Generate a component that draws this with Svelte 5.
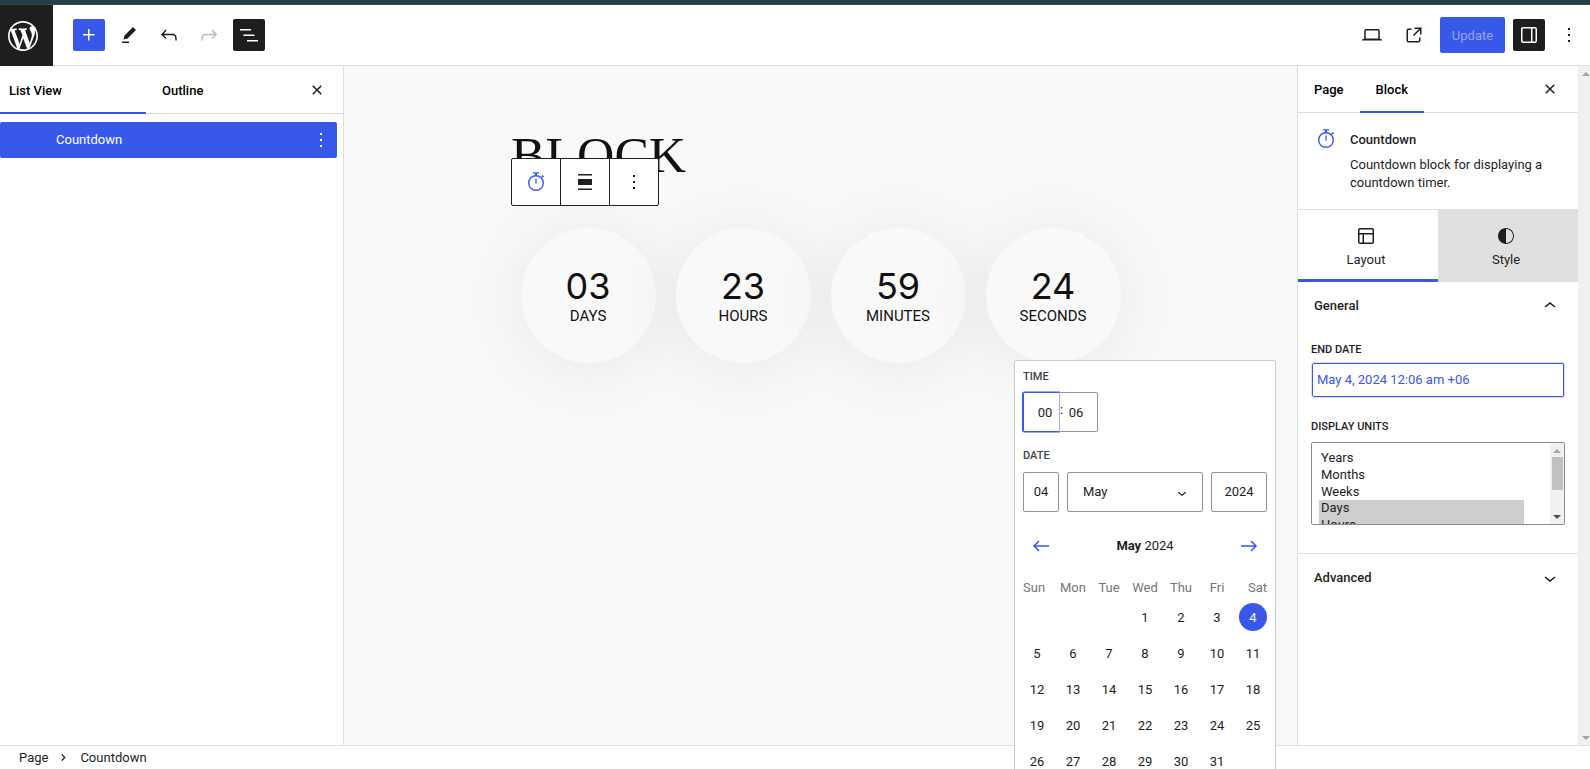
<script>
  const icons = {
    plus: 'M11 12.5V17.5H12.5V12.5H17.5V11H12.5V6H11V11H6V12.5H11Z',
    pencil: 'm19 7-3-3-8.5 8.5-1 4 4-1L19 7Zm-7 11.5H5V20h7v-1.5Z',
    undo: 'M18.3 11.7c-.6-.6-1.4-.9-2.3-.9H6.7l2.9-3.3-1.1-1-4.5 5L8.5 16l1-1-2.7-2.7H16c.5 0 .9.2 1.3.5 1 1 1 3.4 1 4.5v.3h1.5v-.2c0-1.5 0-4.3-1.5-5.7z',
    redo: 'M15.6 6.5l-1.1 1 2.9 3.3H8c-.9 0-1.7.3-2.3.9-1.4 1.5-1.4 4.2-1.4 5.6v.2h1.5v-.3c0-1.1 0-3.5 1-4.5.3-.3.7-.5 1.3-.5h9.2L14.5 15l1.1 1.1 4.6-4.6-4.6-5z',
    list: 'M3 6h11v1.5H3V6Zm3.5 5.5h11V13h-11v-1.5ZM21 17H10v1.5h11V17Z',
    laptop: 'M20.5 16h-.7V8c0-1.1-.9-2-2-2H6.2c-1.1 0-2 .9-2 2v8h-.7c-.8 0-1.5.7-1.5 1.5h20c0-.8-.7-1.5-1.5-1.5zM5.7 8c0-.3.2-.5.5-.5h11.6c.3 0 .5.2.5.5v7.6H5.7V8z',
    external: 'M19.5 4.5h-7V6h4.44l-5.97 5.97 1.06 1.06L18 7.06v4.44h1.5v-7Zm-13 1a2 2 0 0 0-2 2v10a2 2 0 0 0 2 2h10a2 2 0 0 0 2-2v-3H17v3a.5.5 0 0 1-.5.5h-10a.5.5 0 0 1-.5-.5v-10a.5.5 0 0 1 .5-.5h3V5.5h-3Z',
    drawer: 'M18 4H6c-1.1 0-2 .9-2 2v12c0 1.1.9 2 2 2h12c1.1 0 2-.9 2-2V6c0-1.1-.9-2-2-2zm-4 14.5H6c-.3 0-.5-.2-.5-.5V6c0-.3.2-.5.5-.5h8v13zm4.5-.5c0 .3-.2.5-.5.5h-2.5v-13H18c.3 0 .5.2.5.5v12z',
    more: 'M13 19h-2v-2h2v2zm0-6h-2v-2h2v2zm0-6h-2V5h2v2z',
    close: 'M12 13.06l3.712 3.713 1.061-1.06L13.061 12l3.712-3.712-1.06-1.06L12 10.938 8.288 7.227l-1.061 1.06L10.939 12l-3.712 3.712 1.06 1.061L12 13.061z',
    layout: 'M18 5.5H6a.5.5 0 00-.5.5v3h13V6a.5.5 0 00-.5-.5zm.5 5H10v8h8a.5.5 0 00.5-.5v-7.5zm-10 0h-3V18a.5.5 0 00.5.5h2.5v-8zM6 4h12a2 2 0 012 2v12a2 2 0 01-2 2H6a2 2 0 01-2-2V6a2 2 0 012-2z',
    style: 'M12 4c-4.4 0-8 3.6-8 8v.1c0 4.1 3.2 7.5 7.2 7.9h.8c4.4 0 8-3.6 8-8s-3.6-8-8-8zm0 15V5c3.9 0 7 3.1 7 7s-3.1 7-7 7z',
    up: 'M6.5 12.4L12 8l5.5 4.4-.9 1.2L12 10l-4.5 3.6-1-1.2z',
    down: 'M17.5 11.6L12 16l-5.5-4.4.9-1.2L12 14l4.5-3.6 1 1.2z',
    left: 'M20 11.2H6.8l3.7-3.7-1-1L3.9 12l5.6 5.5 1-1-3.7-3.7H20z',
    right: 'm14.5 6.5-1 1 3.7 3.7H4v1.6h13.2l-3.7 3.7 1 1 5.6-5.5z',
    align: 'M5 4h14v1.5H5V4zm0 14.5h14V20H5v-1.5zM5 9h14v6H5V9z'
  };
  const units = [['03', 'DAYS'], ['23', 'HOURS'], ['59', 'MINUTES'], ['24', 'SECONDS']];
  const weekdays = ['Sun', 'Mon', 'Tue', 'Wed', 'Thu', 'Fri', 'Sat'];
  const days = [...Array(3).fill(''), ...Array.from({ length: 31 }, (_, i) => i + 1)];
</script>

{#snippet icon(name, size = 24)}
  <svg width={size} height={size} viewBox="0 0 24 24" fill="currentColor" aria-hidden="true"><path d={icons[name]} fill-rule="evenodd" /></svg>
{/snippet}

{#snippet timer()}
  <svg width="24" height="24" viewBox="0 0 24 24" fill="none" stroke="currentColor" aria-hidden="true">
    <circle cx="12" cy="13" r="7.3" stroke-width="1.4" />
    <path d="M9 2.8h6M12 8.5v5M17.2 7.8l1.8-1.8M18.2 5.4l1.5 1.5" stroke-width="1.3" />
    <path d="M12 3v3" stroke-width="2" />
  </svg>
{/snippet}

<div class="app">
  <div class="strip"></div>
  <header>
    <div class="logo">
      <svg width="36" height="36" viewBox="-2 -2 24 24" fill="currentColor" aria-hidden="true"><path d="M20 10c0-5.51-4.49-10-10-10C4.48 0 0 4.49 0 10c0 5.52 4.48 10 10 10 5.51 0 10-4.48 10-10zM7.78 15.37L4.37 6.22c.55-.02 1.17-.08 1.17-.08.5-.06.44-1.13-.06-1.11 0 0-1.45.11-2.37.11-.18 0-.37 0-.58-.01C4.12 2.69 6.87 1.11 10 1.11c2.33 0 4.45.87 6.05 2.34-.68-.11-1.65.39-1.65 1.58 0 .74.45 1.36.9 2.1.35.61.55 1.36.55 2.46 0 1.49-1.4 5-1.4 5l-3.03-8.37c.54-.02.82-.17.82-.17.5-.05.44-1.25-.06-1.22 0 0-1.44.12-2.38.12-.87 0-2.33-.12-2.33-.12-.5-.03-.56 1.2-.06 1.22l.92.08 1.26 3.41zM17.41 10c.24-.64.74-1.87.43-4.25.7 1.29 1.05 2.71 1.05 4.25 0 3.29-1.73 6.24-4.4 7.78.97-2.59 1.94-5.2 2.92-7.78zM6.1 18.09C3.12 16.65 1.11 13.53 1.11 10c0-1.3.23-2.48.72-3.59C3.25 10.3 4.67 14.2 6.1 18.09zm4.03-6.63l2.58 6.98c-.86.29-1.76.45-2.71.45-.79 0-1.57-.11-2.29-.33.81-2.38 1.62-4.74 2.42-7.1z" /></svg>
    </div>
    <div class="tools">
      <span class="tool blue">{@render icon('plus')}</span>
      <span class="tool">{@render icon('pencil')}</span>
      <span class="tool">{@render icon('undo')}</span>
      <span class="tool muted">{@render icon('redo')}</span>
      <span class="tool dark">{@render icon('list')}</span>
    </div>
    <div class="actions">
      <span class="tool">{@render icon('laptop')}</span>
      <span class="tool">{@render icon('external')}</span>
      <span class="update">Update</span>
      <span class="tool dark">{@render icon('drawer')}</span>
      <span class="tool last">{@render icon('more')}</span>
    </div>
  </header>

  <main>
    <aside class="left">
      <div class="tabs">
        <span class="tab on">List View</span>
        <span class="tab">Outline</span>
        <span class="x">{@render icon('close')}</span>
      </div>
      <div class="row"><span>Countdown</span>{@render icon('more')}</div>
    </aside>

    <section class="canvas">
      <h1>BLOCK</h1>
      <div class="blocktools">
        <span class="accent">{@render timer()}</span>
        <span>{@render icon('align')}</span>
        <span>{@render icon('more')}</span>
      </div>
      <div class="circles">
        {#each units as [n, label]}
          <div class="circle"><div class="num">{n}</div><div class="lab">{label}</div></div>
        {/each}
      </div>
    </section>

    <aside class="right">
      <div class="tabs">
        <span class="tab">Page</span>
        <span class="tab on">Block</span>
        <span class="x">{@render icon('close')}</span>
      </div>
      <div class="card">
        <span class="accent">{@render timer()}</span>
        <div>
          <div class="title">Countdown</div>
          <p>Countdown block for displaying a countdown timer.</p>
        </div>
      </div>
      <div class="modes">
        <div class="mode active">{@render icon('layout')}<span>Layout</span></div>
        <div class="mode">{@render icon('style')}<span>Style</span></div>
      </div>
      <div class="head">General {@render icon('up')}</div>
      <div class="fields">
        <div class="label">END DATE</div>
        <div class="date">May 4, 2024 12:06 am +06</div>
        <div class="label second">DISPLAY UNITS</div>
        <div class="select">
          <div class="options">
            <div>Years</div><div>Months</div><div>Weeks</div>
            <div class="sel">Days</div><div class="sel">Hours</div>
          </div>
          <div class="bar"><i class="tri"></i><b></b><i class="tri dn"></i></div>
        </div>
      </div>
      <div class="head adv">Advanced {@render icon('down')}</div>
    </aside>
    <div class="scroll"><i class="tri"></i><i class="tri dn"></i></div>
  </main>

  <footer>
    <span>Page</span>
    <svg width="6" height="9" viewBox="0 0 6 9" fill="none" stroke="#1e1e1e" stroke-width="1.6" aria-hidden="true"><path d="M1 .8l3.4 3.7L1 8.2" /></svg>
    <span>Countdown</span>
  </footer>

  <div class="popover">
    <div class="plabel">TIME</div>
    <div class="time">
      <span class="box hour">00</span>
      <span class="colon">:</span>
      <span class="box minute">06</span>
    </div>
    <div class="plabel dlabel">DATE</div>
    <div class="daterow">
      <span class="box">04</span>
      <span class="box month">May {@render icon('down', 18)}</span>
      <span class="box">2024</span>
    </div>
    <div class="nav">
      <span class="accent">{@render icon('left')}</span>
      <div><strong>May</strong> 2024</div>
      <span class="accent">{@render icon('right')}</span>
    </div>
    <div class="week">
      {#each weekdays as d}<span>{d}</span>{/each}
    </div>
    <div class="days">
      {#each days as d}<span class:picked={d === 4}>{d}</span>{/each}
    </div>
  </div>
</div>

<style>
  :global(body) { margin: 0; overflow: hidden; }
  .app, .app :global(*) { box-sizing: border-box; }
  .app {
    position: relative; width: 1590px; height: 769px; overflow: hidden;
    display: flex; flex-direction: column; background: #fff; color: #1e1e1e;
    font: 13px/18px Roboto, sans-serif;
  }
  svg { display: block; flex: none; }
  .accent { color: #3858e9; }
  .strip { height: 5px; background: #263f46; border-bottom: 1px solid #3c4a4e; flex: none; }
  header { height: 61px; flex: none; display: flex; border-bottom: 1px solid #e0e0e0; }
  .logo { width: 53px; height: 61px; background: #1e1e1e; color: #fff; padding: 13px 5px; }
  .tools { display: flex; gap: 8px; padding: 14px 0 0 20px; }
  .tool { width: 32px; height: 32px; border-radius: 2px; display: grid; place-items: center; }
  .blue { background: #3858e9; color: #fff; }
  .dark { background: #1e1e1e; color: #fff; }
  .muted { color: #bbb; }
  .actions { margin-left: auto; display: flex; align-items: center; gap: 8px; height: 60px; padding-right: 5px; }
  .actions .tool:nth-child(2) { margin: 0 2px; }
  .update { width: 65px; height: 36px; line-height: 37px; text-align: center; background: #3858e9; color: #94a6f4; border-radius: 2px; }

  main { flex: none; height: 679px; display: flex; }
  .left { width: 344px; border-right: 1px solid #e0e0e0; }
  .tabs { display: flex; border-bottom: 1px solid #ddd; font-weight: 500; color: #000; }
  .left .tabs { height: 48px; }
  .left .tab { width: 146px; padding: 16px 9px 0; }
  .left .tab + .tab { padding-left: 16px; }
  .tab.on { border-bottom: 2px solid #3858e9; margin-bottom: -1px; }
  .x { margin-left: auto; padding: 12px 14px 0 0; color: #1e1e1e; }
  .row { margin-top: 8px; width: 337px; height: 36px; background: #3858e9; color: #fff; border-radius: 2px; display: flex; align-items: center; justify-content: space-between; padding: 0 4px 0 56px; }

  .canvas { width: 953px; background: #f9f9f9; position: relative; overflow: hidden; color: #111; }
  h1 { margin: 0; padding: 59px 0 1px 167px; font: 400 51.7px/60px "Liberation Serif", serif; }
  .blocktools { position: absolute; z-index: 2; left: 167px; top: 92px; width: 148px; height: 48px; background: #fff; color: #1e1e1e; border: 1px solid #1e1e1e; border-radius: 2px; display: flex; }
  .blocktools span { flex: 1; display: grid; place-items: center; }
  .blocktools span + span { border-left: 1px solid #1e1e1e; }
  .blocktools .accent { color: #3858e9; }
  .circles { display: flex; gap: 20px; padding: 42px 0 0 177px; }
  .circle { width: 135px; height: 135px; border-radius: 50%; background: #f9f9f9; box-shadow: 0 5px 70px rgba(0, 0, 0, .08); text-align: center; }
  .num { font: 36px/40px Inter, sans-serif; padding: 38px 1px 1px 0; }
  .lab { font-size: 15px; line-height: 18px; padding-right: 1px; }

  .right { width: 281px; border-left: 1px solid #e0e0e0; }
  .right .tabs { height: 47px; }
  .right .tab { padding: 15px 16px 0; }
  .right .x { padding: 11px 16px 0 0; }
  .card { display: flex; gap: 12px; padding: 16px 16px 0; height: 96px; }
  .card .accent { margin-top: -2px; }
  .title { font-weight: 500; padding-top: 2px; line-height: 18px; }
  p { margin: 7px 0 0; line-height: 18px; }
  .modes { display: flex; height: 73px; border-top: 1px solid #e0e0e0; }
  .mode { flex: 1; display: flex; flex-direction: column; align-items: center; padding: 14px 4px 0 0; gap: 3px; background: #e0e0e0; }
  .mode.active { background: #fff; border-bottom: 3px solid #3858e9; }
  .head { height: 47px; padding: 0 16px; display: flex; align-items: center; justify-content: space-between; font-weight: 500; }
  .fields { height: 224px; padding: 12px 13px 0; }
  .label { font-size: 11px; font-weight: 500; line-height: 18px; }
  .date { height: 34px; margin: 4px 1px 0; border: 1px solid #3858e9; box-shadow: 0 0 0 1px #d6dcf2; border-radius: 2px; padding: 0 4px; line-height: 31px; color: #3858e9; }
  .second { margin-top: 21px; }
  .select { margin-top: 6px; height: 83px; border: 1px solid #8c8c8c; border-radius: 2px; display: flex; overflow: hidden; }
  .options { width: 212px; padding: 6px 0 0 7px; line-height: 17px; flex: none; }
  .options div { padding-left: 2px; height: 17px; }
  .options .sel { background: #cecece; line-height: 16px; }
  .options .sel:last-child { height: 24px; }
  .bar { margin-left: auto; width: 14px; background: #f1f1f1; display: flex; flex-direction: column; align-items: center; padding: 6px 0 5px; }
  .bar b { width: 11px; height: 33px; background: #c1c1c1; margin-top: 4px; }
  .tri { border: 4px solid transparent; border-top: 0; border-bottom-color: #a3a3a3; width: 0; }
  .tri.dn { margin-top: auto; border-top: 4px solid #a3a3a3; border-bottom: 0; }
  .bar .tri.dn { border-top-color: #505050; }
  .adv { border-top: 1px solid #e0e0e0; height: 48px; }
  .scroll { width: 12px; background: #f0f0f0; display: flex; flex-direction: column; align-items: center; padding: 6px 0 5px 3px; }

  footer { height: 24px; border-top: 1px solid #e0e0e0; display: flex; align-items: center; padding: 0 19px; }
  footer svg { margin: 0 14px 0 13px; width: 5px; }

  .popover { position: absolute; z-index: 5; left: 1014px; top: 360px; width: 262px; height: 420px; background: #fff; border: 1px solid #ccc; border-radius: 2px; box-shadow: 0 1px 2px rgba(0, 0, 0, .06); padding: 7px 8px; }
  .plabel { font-size: 11px; font-weight: 500; line-height: 18px; color: #3c434a; }
  .time { display: flex; margin-top: 6px; }
  .box { height: 40px; border: 1px solid #949494; border-radius: 2px; display: flex; align-items: center; justify-content: center; }
  .time .box { padding-top: 1px; }
  .hour { width: 37px; padding-left: 7px; border-color: #3858e9; border-right-color: #a0aff5; box-shadow: -.5px 0 0 .5px #3858e9; clip-path: inset(-1px 0 -1px -1px); border-radius: 2px 0 0 2px; }
  .colon { width: 0; line-height: 36px; }
  .minute { width: 38px; border-left: 0; border-radius: 0 2px 2px 0; padding-right: 5px; }
  .dlabel { margin-top: 14px; line-height: 20px; }
  .daterow { display: grid; grid-template-columns: 36px 136px 56px; gap: 8px; margin-top: 6px; }
  .month { justify-content: space-between; padding: 0 11px 0 15px; }
  .month svg { margin-top: 1px; }
  .nav { display: flex; justify-content: space-between; align-items: center; height: 24px; margin-top: 22px; padding: 0 6px; }
  .week { display: grid; grid-template-columns: repeat(7, 28px); gap: 8px; margin-top: 21px; color: #757575; }
  .week span { display: flex; justify-content: center; }
  .week span:first-child { justify-content: flex-start; }
  .week span:last-child { justify-content: flex-end; }
  .days { display: grid; grid-template-columns: repeat(7, 28px); gap: 8px; margin-top: 6px; }
  .days span { width: 28px; height: 28px; line-height: 29px; border-radius: 50%; text-align: center; }
  .days .picked { background: #3858e9; color: #fff; }
</style>
